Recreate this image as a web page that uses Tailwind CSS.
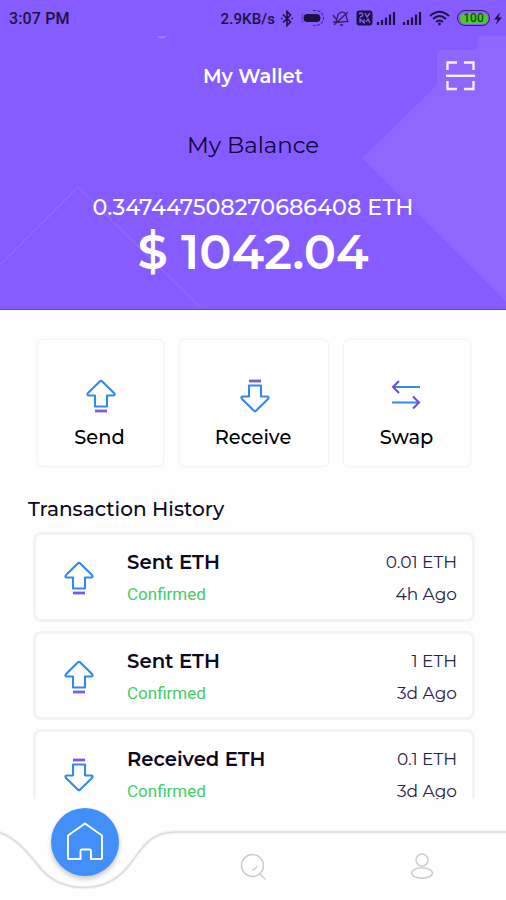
<!DOCTYPE html>
<html lang="en">
<head>
    <meta charset="UTF-8">
    <meta name="viewport" content="width=device-width, initial-scale=1.0">
    <title>My Wallet</title>
    <script src="https://cdn.jsdelivr.net/npm/@tailwindcss/browser@4"></script>
</head>
<body class="bg-[#fefefe] font-['Montserrat','Inter',sans-serif] text-[#0b0820]">
    <!-- Shared icons -->
    <svg class="hidden">
        <symbol id="arrow-up" viewBox="0 0 30 34">
            <path d="M14 2.3 Q15 1.3 16 2.3 L28 14 Q29.5 16.5 27 16.5 H21 V27.5 H9 V16.5 H3 Q.5 16.5 2 14 Z" fill="none" stroke="#3289ea" stroke-width="2.1" stroke-linejoin="round"/>
            <path d="M9 32 H21" stroke="#7f58e8" stroke-width="2.8"/>
        </symbol>
        <symbol id="arrow-down" viewBox="0 0 30 34">
            <path d="M9 2 H21" stroke="#7f58e8" stroke-width="2.8"/>
            <path d="M14 31.7 Q15 32.7 16 31.7 L28 20 Q29.5 17.5 27 17.5 H21 V6.5 H9 V17.5 H3 Q.5 17.5 2 20 Z" fill="none" stroke="#3289ea" stroke-width="2.1" stroke-linejoin="round"/>
        </symbol>
        <symbol id="signal" viewBox="0 0 20 16">
            <path d="M2 15 V12 M6 15 V10 M10 15 V7.5 M14 15 V4.5 M18 15 V2" stroke="currentColor" stroke-width="2.2" fill="none"/>
        </symbol>
    </svg>

    <div class="relative h-[900px] w-[506px] overflow-hidden">
        <header class="relative h-[310px] border-b border-[#7440e8] bg-[#855cff] text-white">
            <svg class="absolute inset-0" width="506" height="309" viewBox="0 0 506 309">
                <path d="M506 36 H478 V44 Q478 50 470 50 H443 Q437 50 437 56 V85 L362 158 L506 301 Z" fill="#8d67ff"/>
                <path d="M0 265 L78 187 L200 307" fill="none" stroke="#9470ff" stroke-width="1.6" opacity=".65"/>
                <path d="M157 36 H167 Q162 42 157 36" fill="#9b7bff"/>
            </svg>

            <!-- Status bar -->
            <div class="relative flex h-9 items-center justify-between pr-1 pl-[9px] font-[Roboto] text-[#1d1245]">
                <span class="pt-px text-[16px] font-medium tracking-[.15px]">3:07 PM</span>
                <div class="flex items-center">
                    <span class="mr-[5px] pt-[2px] text-[15px] font-medium tracking-[.1px]">2.9KB/s</span>
                    <svg class="mr-[7px]" width="14" height="17" viewBox="0 0 14 17" fill="none" stroke="currentColor" stroke-width="1.6"><path d="M3 4.5 L10.5 12 L7 15.5 V1.5 L10.5 5 L3 12.5 M1 8.5 H2.5 M11.5 8.5 H13"/></svg>
                    <svg class="mr-[7px]" width="24" height="18" viewBox="0 0 24 18" fill="none" stroke="currentColor"><rect x="3" y="5.5" width="16" height="7" rx="3" fill="currentColor"/><path d="M12 1.5 Q22 1 22.5 9 Q22 17 12 16.5" stroke-dasharray="3 1.5" stroke-width="1.1" opacity=".7"/><path d="M2 4 Q-.5 9 2 14" opacity=".4"/></svg>
                    <svg class="mr-[6px]" width="18" height="17" viewBox="0 0 18 17" fill="none" stroke="currentColor" stroke-width="1.3" opacity=".8"><path d="M4 12.5 L6 4.5 Q10 0 14 4 L14.5 8 L16 11.5 L4 12.5 M8 15 H11 M2 15 L16 2 M1 5 L4 9 M1 12 H4"/></svg>
                    <svg class="mr-[3px]" width="17" height="16" viewBox="0 0 17 16"><rect x=".5" y=".5" width="16" height="15" rx="3" fill="currentColor"/><path d="M3 4 Q5 2 6.5 4 Q8 6 4 7 M9 3 L11 7 L14 3 M4 13 V9 L8 13 V9 M10 12 L12 9 L14 13" fill="none" stroke="#855cff" stroke-width="1.3"/></svg>
                    <svg class="mr-[6px]" width="20" height="16"><use href="#signal"/></svg>
                    <svg class="mr-[7px]" width="20" height="16"><use href="#signal"/></svg>
                    <svg class="mr-[7px]" width="21" height="16" viewBox="0 0 21 16" fill="none" stroke="currentColor" stroke-width="2"><path d="M1 6 Q10.5 -2.5 20 6 M4 9 Q10.5 3 17 9 M7 12 Q10.5 9 14 12"/><circle cx="10.5" cy="14" r="1.4" fill="currentColor" stroke="none"/></svg>
                    <div class="mr-[4px] flex h-4 w-[33px] items-center rounded-full border-[1.5px] border-[#2c2057] p-[1.5px]">
                        <span class="h-full w-full rounded-full bg-[#4ecb22] text-center text-[12px] leading-[11px] font-medium text-[#1b4a1c]">100</span>
                    </div>
                    <svg width="8" height="13" viewBox="0 0 9 14"><path d="M7 0 L0 8 H4 L2 14 L9 6 H5 Z" fill="currentColor"/></svg>
                </div>
            </div>

            <div class="relative flex h-20 items-center justify-center">
                <h1 class="pt-[2px] text-[19.5px] font-semibold">My Wallet</h1>
                <svg class="absolute top-[25px] right-[31px]" width="29" height="30" viewBox="0 0 29 30" fill="none" stroke="#f6f1ff" stroke-width="2.4"><path d="M1.5 9 V1.5 H11 M18 1.5 H27.5 V9 M1.5 20 V28 H11 M18 28 H27.5 V20"/><path d="M0 14.8 H29"/></svg>
            </div>
            <div class="relative flex flex-col items-center">
                <p class="mt-[13px] text-[22.8px] leading-8 text-[#0f0638]">My Balance</p>
                <p class="mt-[30px] text-[22.3px] leading-8 font-medium">0.347447508270686408 ETH</p>
                <p class="-mt-px text-[48px] leading-[60px] font-semibold">$ 1042.04</p>
            </div>
        </header>

        <!-- Actions -->
        <div class="mt-[29px] ml-[37px] flex h-32 gap-[14.5px] text-[19.4px] font-medium text-black">
            <div class="flex w-[127px] flex-col items-center rounded-md border border-[#f5f5f5] bg-white pt-[39px] shadow-[0_0_2px_#f4f4f4]">
                <svg width="30" height="34"><use href="#arrow-up"/></svg>
                <span class="mt-[10px] pr-[2px] leading-7">Send</span>
            </div>
            <div class="flex w-[150px] flex-col items-center rounded-md border border-[#f5f5f5] bg-white pt-[39px] shadow-[0_0_2px_#f4f4f4]">
                <svg class="translate-x-px" width="30" height="34"><use href="#arrow-down"/></svg>
                <span class="mt-[10px] pr-px leading-7">Receive</span>
            </div>
            <div class="flex w-[128px] flex-col items-center rounded-md border border-[#f5f5f5] bg-white pt-[39px] shadow-[0_0_2px_#f4f4f4]">
                <svg class="-translate-x-px" width="30" height="34" viewBox="0 0 30 34" fill="none" stroke-width="2.1"><path d="M2 8 H29 M1 23.5 H28" stroke="#358ae5"/><path d="M8 2 L2 8 L8 14 M22 17.5 L28 23.5 L22 29.5" stroke="#7549e6"/></svg>
                <span class="mt-[10px] pr-px leading-7">Swap</span>
            </div>
        </div>

        <h2 class="mt-[28px] ml-[28px] text-[20.1px] leading-7 font-medium">Transaction History</h2>

        <!-- Transactions, cut off above the tab bar -->
        <div class="mt-[9px] ml-[33px] flex h-[267px] w-[442px] flex-col gap-[9px] overflow-hidden">
            <div class="flex h-[89.5px] shrink-0 rounded-lg border-[3px] border-[#f3f3f3] bg-white pt-[13px] pr-[15px] pl-[28px]">
                <svg class="mt-[13px]" width="30" height="34"><use href="#arrow-up"/></svg>
                <div class="ml-[33px] flex-1">
                    <p class="text-[19.7px] leading-7 font-semibold">Sent ETH</p>
                    <p class="mt-[4px] font-[Roboto] text-[17px] leading-7 text-[#43ce62]">Confirmed</p>
                </div>
                <div class="text-right text-[17px] text-[#27234b]">
                    <p class="leading-7">0.01 ETH</p>
                    <p class="mt-[4px] leading-7">4h Ago</p>
                </div>
            </div>
            <div class="flex h-[89.5px] shrink-0 rounded-lg border-[3px] border-[#f3f3f3] bg-white pt-[13px] pr-[15px] pl-[28px]">
                <svg class="mt-[13px]" width="30" height="34"><use href="#arrow-up"/></svg>
                <div class="ml-[33px] flex-1">
                    <p class="text-[19.7px] leading-7 font-semibold">Sent ETH</p>
                    <p class="mt-[4px] font-[Roboto] text-[17px] leading-7 text-[#43ce62]">Confirmed</p>
                </div>
                <div class="text-right text-[17px] text-[#27234b]">
                    <p class="leading-7">1 ETH</p>
                    <p class="mt-[4px] leading-7">3d Ago</p>
                </div>
            </div>
            <div class="flex h-[89.5px] shrink-0 rounded-lg border-[3px] border-[#f3f3f3] bg-white pt-[12.5px] pr-[15px] pl-[28px]">
                <svg class="mt-[13px]" width="30" height="34"><use href="#arrow-down"/></svg>
                <div class="ml-[33px] flex-1">
                    <p class="text-[19.6px] leading-7 font-semibold">Received ETH</p>
                    <p class="mt-[4px] font-[Roboto] text-[17px] leading-7 text-[#43ce62]">Confirmed</p>
                </div>
                <div class="text-right text-[17px] text-[#27234b]">
                    <p class="leading-7">0.1 ETH</p>
                    <p class="mt-[4px] leading-7">3d Ago</p>
                </div>
            </div>
        </div>

        <!-- Tab bar -->
        <nav class="absolute inset-x-0 bottom-0 h-[102px]">
            <svg class="absolute inset-0" width="506" height="102" viewBox="0 0 506 102">
                <path d="M-2 34 C17 40 28 55 42 72 C52 83 65 89.5 84 89.5 C103 89.5 116 82 126 71 C140 55 147 34 175 34 H508" fill="none" stroke="#f5f5f5" stroke-width="4"/>
                <path d="M-2 34 C17 40 28 55 42 72 C52 83 65 89.5 84 89.5 C103 89.5 116 82 126 71 C140 55 147 34 175 34 H508" fill="none" stroke="#dcdcdc" stroke-width="1.6"/>
            </svg>
            <div class="relative grid grid-cols-3">
                <div class="pt-[9.5px] pl-[51px]">
                    <div class="flex size-[68px] items-center justify-center rounded-full bg-[#438ffa] shadow-[0_3px_5px_#00000038]">
                        <svg class="-translate-y-px" width="36" height="38" viewBox="0 0 36 38" fill="none" stroke="white" stroke-width="1.9" stroke-linejoin="round"><path d="M1 13.5 L18 1.5 L35 13.5 V36 Q35 37 34 37 H24 V29 Q24 27.5 22.5 27.5 H15 Q13.5 27.5 13.5 29 V37 H2 Q1 37 1 36 Z"/></svg>
                    </div>
                </div>
                <div class="flex justify-center pt-[55px]">
                    <svg class="translate-x-px" width="27" height="28" viewBox="0 0 27 28" fill="none" stroke="#cbcbcb" stroke-width="1.4"><circle cx="12.5" cy="12.5" r="11"/><path d="M19 20 L25.5 26.5 M17 12.5 Q16.5 16 12.5 17"/></svg>
                </div>
                <div class="flex justify-center pt-[55px]">
                    <svg width="24" height="27" viewBox="0 0 24 27" fill="none" stroke="#cbcbcb" stroke-width="1.4"><circle cx="12" cy="7" r="6"/><ellipse cx="12" cy="20" rx="10.5" ry="5.2"/></svg>
                </div>
            </div>
        </nav>
    </div>
</body>
</html>
